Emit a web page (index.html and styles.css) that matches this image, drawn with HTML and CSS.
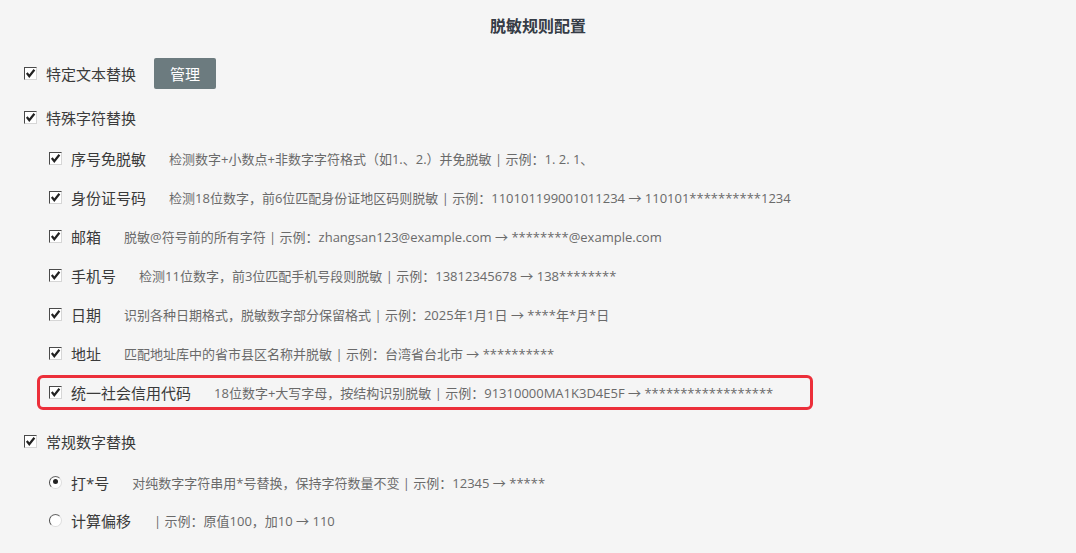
FILE: index.html
```html
<!DOCTYPE html>
<html lang="zh-CN">
<head>
    <meta charset="UTF-8">
    <meta name="viewport" content="width=device-width, initial-scale=1.0">
    <title>脱敏规则配置</title>
    <link rel="stylesheet" href="styles.css">
</head>
<body>
    <h1 class="title">脱敏规则配置</h1>

    <div class="rules">
        <!-- 特定文本替换 -->
        <div class="row top-row">
            <span class="check"><svg viewBox="0 0 11 11"><path d="M1.8 5 L4.3 8.2 L9.4 1.8" /></svg></span>
            <span class="label">特定文本替换</span>
            <button class="manage-btn">管理</button>
        </div>

        <!-- 特殊字符替换 -->
        <div class="row top-row">
            <span class="check"><svg viewBox="0 0 11 11"><path d="M1.8 5 L4.3 8.2 L9.4 1.8" /></svg></span>
            <span class="label">特殊字符替换</span>
        </div>

        <div class="sub-list">
            <div class="row sub-row">
                <span class="check"><svg viewBox="0 0 11 11"><path d="M1.8 5 L4.3 8.2 L9.4 1.8" /></svg></span>
                <span class="label">序号免脱敏</span>
                <span class="desc">检测数字+小数点+非数字字符格式（如1.、2.）并免脱敏 | 示例：1. 2. 1、</span>
            </div>
            <div class="row sub-row">
                <span class="check"><svg viewBox="0 0 11 11"><path d="M1.8 5 L4.3 8.2 L9.4 1.8" /></svg></span>
                <span class="label">身份证号码</span>
                <span class="desc">检测18位数字，前6位匹配身份证地区码则脱敏 | 示例：110101199001011234 → 110101**********1234</span>
            </div>
            <div class="row sub-row">
                <span class="check"><svg viewBox="0 0 11 11"><path d="M1.8 5 L4.3 8.2 L9.4 1.8" /></svg></span>
                <span class="label">邮箱</span>
                <span class="desc">脱敏@符号前的所有字符 | 示例：zhangsan123@example.com → ********@example.com</span>
            </div>
            <div class="row sub-row">
                <span class="check"><svg viewBox="0 0 11 11"><path d="M1.8 5 L4.3 8.2 L9.4 1.8" /></svg></span>
                <span class="label">手机号</span>
                <span class="desc">检测11位数字，前3位匹配手机号段则脱敏 | 示例：13812345678 → 138********</span>
            </div>
            <div class="row sub-row">
                <span class="check"><svg viewBox="0 0 11 11"><path d="M1.8 5 L4.3 8.2 L9.4 1.8" /></svg></span>
                <span class="label">日期</span>
                <span class="desc">识别各种日期格式，脱敏数字部分保留格式 | 示例：2025年1月1日 → ****年*月*日</span>
            </div>
            <div class="row sub-row">
                <span class="check"><svg viewBox="0 0 11 11"><path d="M1.8 5 L4.3 8.2 L9.4 1.8" /></svg></span>
                <span class="label">地址</span>
                <span class="desc">匹配地址库中的省市县区名称并脱敏 | 示例：台湾省台北市 → **********</span>
            </div>
            <div class="row sub-row highlight">
                <span class="check"><svg viewBox="0 0 11 11"><path d="M1.8 5 L4.3 8.2 L9.4 1.8" /></svg></span>
                <span class="label">统一社会信用代码</span>
                <span class="desc">18位数字+大写字母，按结构识别脱敏 | 示例：91310000MA1K3D4E5F → ******************</span>
            </div>
        </div>

        <!-- 常规数字替换 -->
        <div class="row top-row">
            <span class="check"><svg viewBox="0 0 11 11"><path d="M1.8 5 L4.3 8.2 L9.4 1.8" /></svg></span>
            <span class="label">常规数字替换</span>
        </div>

        <div class="sub-list">
            <div class="row radio-row">
                <span class="radio checked"></span>
                <span class="label">打*号</span>
                <span class="desc">对纯数字字符串用*号替换，保持字符数量不变 | 示例：12345 → *****</span>
            </div>
            <div class="row radio-row">
                <span class="radio"></span>
                <span class="label">计算偏移</span>
                <span class="desc">| 示例：原值100，加10 → 110</span>
            </div>
        </div>
    </div>
</body>
</html>
```

FILE: styles.css
```css
body {
    margin: 0;
    padding: 0;
    background-color: #f5f5f5;
    font-family: "Open Sans", "Noto Sans CJK SC", sans-serif;
    color: #3a3a3a;
}

.title {
    margin: 16px 0 0;
    font-size: 16px;
    line-height: 20px;
    font-weight: bold;
    color: #363c46;
    text-align: center;
}

.rules {
    margin-top: 15px;
    padding-left: 24px;
}

.row {
    display: flex;
    align-items: center;
}

.top-row {
    height: 44px;
}

.sub-list {
    padding-left: 25px;
}

.sub-row {
    height: 39px;
}

.radio-row {
    height: 38px;
}

/* checkbox */
.check {
    width: 13px;
    height: 13px;
    box-sizing: border-box;
    background-color: #fff;
    border-top: 1px solid #4a4a4a;
    border-left: 1px solid #4a4a4a;
    border-right: 1px solid #d6d6d6;
    border-bottom: 1px solid #d6d6d6;
    margin-right: 9px;
    flex-shrink: 0;
    display: flex;
}

.check svg {
    width: 11px;
    height: 11px;
}

.check path {
    fill: none;
    stroke: #222;
    stroke-width: 2.2;
}

/* radio */
.radio {
    width: 13px;
    height: 13px;
    box-sizing: border-box;
    border-radius: 50%;
    background-color: #fff;
    border: 1.5px solid #ddd;
    border-left-color: #444;
    border-top-color: #666;
    margin-right: 9px;
    flex-shrink: 0;
    position: relative;
}

.radio.checked::after {
    content: "";
    position: absolute;
    left: 2.5px;
    top: 2.5px;
    width: 5px;
    height: 5px;
    border-radius: 50%;
    background-color: #222;
}

.label {
    font-size: 15px;
    color: #3a3a3a;
    white-space: nowrap;
}

.desc {
    margin-left: 23px;
    font-size: 13px;
    color: #6a6a6a;
    white-space: nowrap;
}

.manage-btn {
    margin-left: 18px;
    width: 62px;
    height: 31px;
    border: none;
    border-radius: 2px;
    background-color: #6c7b7f;
    color: #fff;
    font-family: inherit;
    font-size: 15px;
    cursor: pointer;
}

.highlight {
    width: 776px;
    height: 35px;
    margin: 2px 0 2px -12px;
    padding-left: 9px;
    box-sizing: border-box;
    border: 3px solid #ec2f3a;
    border-radius: 6px;
}

.sub-list + .top-row {
    margin-top: 9px;
}
```
